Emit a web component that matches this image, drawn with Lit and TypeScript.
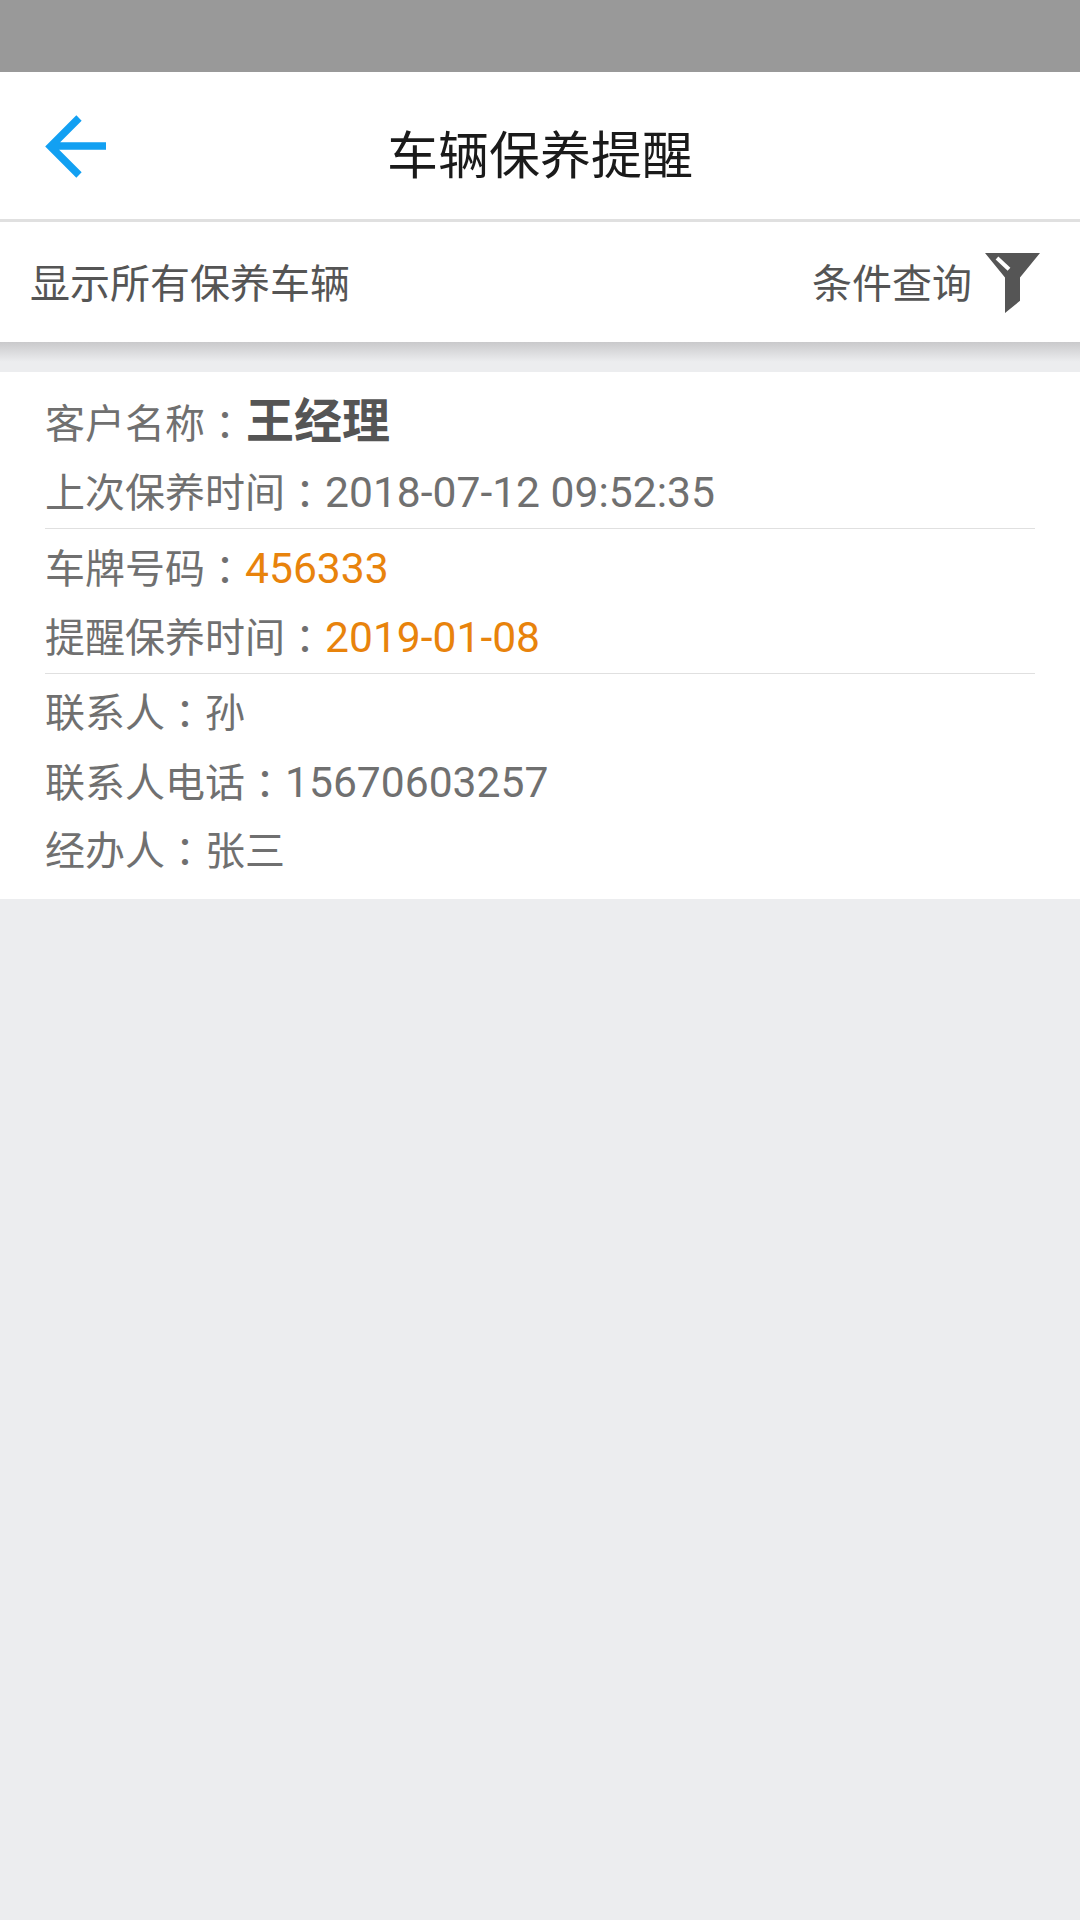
import { LitElement, html, css } from "lit";
import { customElement } from "lit/decorators.js";

@customElement("app-root")
export class AppRoot extends LitElement {
  static styles = css`
    :host {
      display: block;
      width: 1080px;
      height: 1920px;
      background: #ecedef;
      font-family: Roboto, "Noto Sans CJK SC", sans-serif;
      overflow: hidden;
    }
    .status { height: 72px; background: #999999; }
    .header {
      height: 147px;
      background: #fff;
      display: flex;
      align-items: center;
      justify-content: center;
      position: relative;
      border-bottom: 3px solid #e0e0e0;
    }
    .back { position: absolute; left: 44px; top: 40px; width: 64px; height: 66px; }
    .title { font-size: 51px; color: #1a1a1a; line-height: 1; padding-top: 22px; }
    .filter {
      height: 120px;
      background: #fff;
      display: flex;
      align-items: center;
      justify-content: space-between;
      padding: 0 39px 0 30px;
      color: #555;
      font-size: 40px;
    }
    .label { padding-bottom: 2px; }
    .query { display: flex; align-items: center; gap: 13px; }
    .funnel { width: 56px; height: 61px; display: block; margin-top: 2px; }
    .shadow { height: 30px; background: linear-gradient(#c9c9cb, #ecedef 66%); }
    .card {
      background: #fff;
      padding: 15px 45px 15px;
      color: #707070;
      font-size: 40px;
    }
    .row { box-sizing: border-box; height: 69px; padding-top: 2px; line-height: 69px; white-space: nowrap; }
    .row.first { padding-top: 0; }
    .row.top { height: 70px; line-height: 68px; }
    .num { font-size: 42.600px; }
    .colon { font-family: "Noto Sans CJK TC", sans-serif; line-height: 0; vertical-align: -2px; }
    .name { font-size: 48px; font-weight: 700; color: #555; margin-left: 1px; }
    .hl { color: #e8830c; }
    .sep { height: 1px; background: #e0e0e0; }
    .sep.a { margin: 2px 0 3px; }
    .sep.b { margin: 3px 0 3px; }
  `;

  private colon() {
    return html`<span class="colon">：</span>`;
  }

  render() {
    return html`
      <div class="status"></div>
      <div class="header">
        <svg class="back" viewBox="0 0 64 66" fill="none">
          <path d="M35 6 L6.500 34.500 L35 63 M8 34 H62" stroke="#12a0f2" stroke-width="7.500"></path>
        </svg>
        <div class="title">车辆保养提醒</div>
      </div>
      <div class="filter">
        <div class="label">显示所有保养车辆</div>
        <div class="query">
          <span class="label">条件查询</span>
          <svg class="funnel" viewBox="0 0 56 60" preserveAspectRatio="none">
            <path d="M0 0 H55 L35 24 V47 L20 59 V24 Z" fill="#555"></path>
            <path d="M12 5 L24 16" stroke="#fff" stroke-width="4"></path>
          </svg>
        </div>
      </div>
      <div class="shadow"></div>
      <div class="card">
        <div class="row first">客户名称${this.colon()}<span class="name">王经理</span></div>
        <div class="row top">上次保养时间${this.colon()}<span class="num">2018-07-12 09:52:35</span></div>
        <div class="sep a"></div>
        <div class="row">车牌号码${this.colon()}<span class="num hl">456333</span></div>
        <div class="row">提醒保养时间${this.colon()}<span class="num hl">2019-01-08</span></div>
        <div class="sep b"></div>
        <div class="row">联系人${this.colon()}孙</div>
        <div class="row">联系人电话${this.colon()}<span class="num">15670603257</span></div>
        <div class="row">经办人${this.colon()}张三</div>
      </div>
    `;
  }
}
